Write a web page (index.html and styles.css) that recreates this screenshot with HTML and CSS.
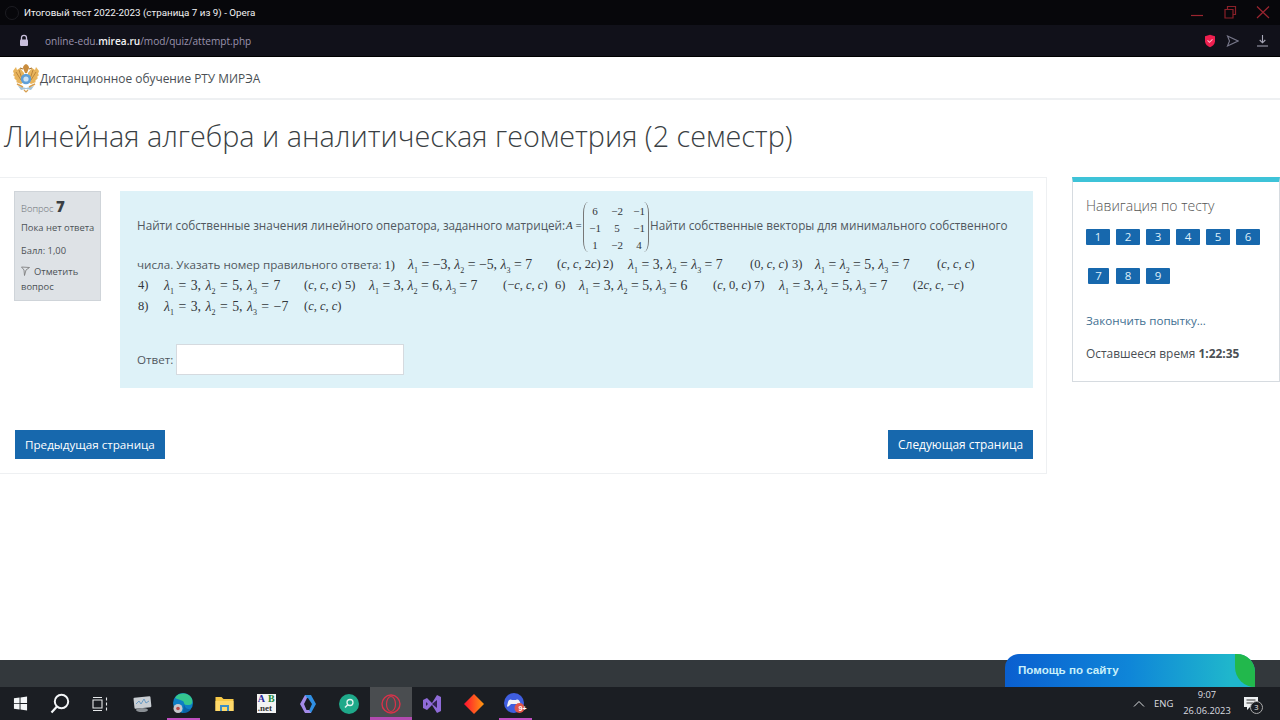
FILE: index.html
```html
<!DOCTYPE html>
<html lang="ru">
<head>
<meta charset="utf-8">
<title>Итоговый тест 2022-2023</title>
<link rel="stylesheet" href="styles.css">
</head>
<body>
<div class="screen">
  <div class="titlebar">
    <span class="title-dot"></span>
    <span class="title-text">Итоговый тест 2022-2023 (страница 7 из 9) - Opera</span>
    <div class="winctl">
      <svg width="14" height="14" viewBox="0 0 14 14"><path d="M1 10.500h12" stroke="#9a2530" stroke-width="1.200" fill="none"/></svg>
      <svg width="14" height="14" viewBox="0 0 14 14"><path d="M2 4.500h8v8.500H2zM4.500 4.500V1.500h8v8h-2.500" stroke="#8a2029" stroke-width="1.200" fill="none"/></svg>
      <svg width="14" height="14" viewBox="0 0 14 14"><path d="M1 1.500l12 11.500M13 1.500L1 13" stroke="#9a2530" stroke-width="1.200" fill="none"/></svg>
    </div>
  </div>
  <div class="urlbar">
    <svg class="lock" width="12" height="13" viewBox="0 0 12 13"><path d="M3.500 6V3.800a2.500 2.500 0 0 1 5 0V6" stroke="#c9bfdc" stroke-width="1.300" fill="none"/><rect x="2" y="5.500" width="8" height="6.500" rx="1" fill="#c9bfdc"/></svg>
    <span class="url">online-edu.<b>mirea.ru</b>/mod/quiz/attempt.php</span>
    <div class="url-tools">
      <svg width="12" height="14" viewBox="0 0 12 14"><path d="M1 2.200L6 .8l5 1.400v5c0 3-2.400 5-5 6-2.600-1-5-3-5-6z" fill="#ee1f4f"/><path d="M3.500 6.300l2 2 3-3" stroke="#ffb3c4" stroke-width="1.100" fill="none"/></svg>
      <svg width="13" height="12" viewBox="0 0 13 12"><path d="M1.500 1l10.500 5-10.500 5 2-5z" stroke="#77778a" stroke-width="1.100" fill="none"/></svg>
      <svg width="13" height="13" viewBox="0 0 13 13"><path d="M6.500 1v7.500M3.700 6l2.800 2.800L9.300 6M1 12h11" stroke="#a8a8b8" stroke-width="1.100" fill="none"/></svg>
    </div>
  </div>

  <header class="sitebar">
    <svg class="crest" width="28" height="30" viewBox="0 0 28 30">
      <path d="M12 10L8 5 5 7 4 4 1 8l1 3-1 1 2 2-1 1 3 3-1 1 5 2 3-2z" fill="#e8b45c"/>
      <path d="M16 10l4-5 3 2 1-3 3 4-1 3 1 1-2 2 1 1-3 3 1 1-5 2-3-2z" fill="#e8b45c"/>
      <path d="M4 9l5 8M7 7l3 9M24 9l-5 8M21 7l-3 9" stroke="#b67f38" stroke-width=".9"/>
      <path d="M11 5c0-2 1-3 3-4 2 1 3 2 3 4l-2 5h-2z" fill="#c98c3d"/>
      <path d="M11 6l-3-1M17 6l3-1" stroke="#a8742f" stroke-width="1.200"/>
      <circle cx="14" cy="16" r="5.200" fill="#5f9fd8"/>
      <circle cx="14" cy="16" r="2.600" fill="#cfe3f4"/>
      <path d="M6 23l8 2 8-2-3 4-5-1-5 1z" fill="#a4c4da"/>
      <path d="M5 21l6 3M23 21l-6 3" stroke="#d79f50" stroke-width="1.600"/>
      <path d="M12 27l2 2 2-2" stroke="#d79f50" stroke-width="1.200" fill="none"/>
    </svg>
    <span class="brand">Дистанционное обучение РТУ МИРЭА</span>
  </header>

  <main class="page">
    <h1 class="course">Линейная алгебра и аналитическая геометрия (2 семестр)</h1>
    <div class="columns">
      <section class="quiz">
        <div class="question">
          <aside class="qinfo">
            <div class="qno">Вопрос <b>7</b></div>
            <div class="qline">Пока нет ответа</div>
            <div class="qline">Балл: 1,00</div>
            <div class="qflag"><svg class="flagicon" width="9" height="10" viewBox="0 0 9 10"><path d="M.5 1l8 .5L5 4 3.500 9.500 3 4z" stroke="#777" stroke-width=".8" fill="none"/></svg><span class="flagtext">Отметить</span><br>вопрос</div>
          </aside>
          <div class="qbody">
            <div class="line first">
              <span>Найти собственные значения линейного оператора, заданного матрицей:</span>
              <span class="math a-eq"><i>A</i> =</span>
              <span class="matrix">
                <span>6</span><span>−2</span><span>−1</span>
                <span>−1</span><span>5</span><span>−1</span>
                <span>1</span><span>−2</span><span>4</span>
              </span>
              <span class="after">Найти собственные векторы для минимального собственного</span>
            </div>
            <div class="line second">
              <span class="t258">числа. Указать номер правильного ответа: <span class="math">1)</span></span>
              <span class="math eq e1"><i>λ</i><sub>1</sub> = −3, <i>λ</i><sub>2</sub> = −5, <i>λ</i><sub>3</sub> = 7</span>
              <span class="math v1">(<i>c</i>, <i>c</i>, 2<i>c</i>)</span>
              <span class="math n">2)</span>
              <span class="math eq e2"><i>λ</i><sub>1</sub> = 3, <i>λ</i><sub>2</sub> = <i>λ</i><sub>3</sub> = 7</span>
              <span class="math v2">(0, <i>c</i>, <i>c</i>)</span>
              <span class="math n3">3)</span>
              <span class="math eq e3"><i>λ</i><sub>1</sub> = <i>λ</i><sub>2</sub> = 5, <i>λ</i><sub>3</sub> = 7</span>
              <span class="math v3">(<i>c</i>, <i>c</i>, <i>c</i>)</span>
            </div>
            <div class="line third">
              <span class="math n4">4)</span>
              <span class="math eq e4"><i>λ</i><sub>1</sub> = 3, <i>λ</i><sub>2</sub> = 5, <i>λ</i><sub>3</sub> = 7</span>
              <span class="math v4">(<i>c</i>, <i>c</i>, <i>c</i>)</span>
              <span class="math n5">5)</span>
              <span class="math eq e5"><i>λ</i><sub>1</sub> = 3, <i>λ</i><sub>2</sub> = 6, <i>λ</i><sub>3</sub> = 7</span>
              <span class="math v5">(−<i>c</i>, <i>c</i>, <i>c</i>)</span>
              <span class="math n6">6)</span>
              <span class="math eq e6"><i>λ</i><sub>1</sub> = 3, <i>λ</i><sub>2</sub> = 5, <i>λ</i><sub>3</sub> = 6</span>
              <span class="math v6">(<i>c</i>, 0, <i>c</i>)</span>
              <span class="math n">7)</span>
              <span class="math eq e7"><i>λ</i><sub>1</sub> = 3, <i>λ</i><sub>2</sub> = 5, <i>λ</i><sub>3</sub> = 7</span>
              <span class="math v7">(2<i>c</i>, <i>c</i>, −<i>c</i>)</span>
            </div>
            <div class="line fourth">
              <span class="math n4">8)</span>
              <span class="math eq e4"><i>λ</i><sub>1</sub> = 3, <i>λ</i><sub>2</sub> = 5, <i>λ</i><sub>3</sub> = −7</span>
              <span class="math v4">(<i>c</i>, <i>c</i>, <i>c</i>)</span>
            </div>
            <div class="answer">
              <label class="answer-label" for="ans">Ответ:</label>
              <input id="ans" class="answer-input" type="text">
            </div>
          </div>
        </div>
        <div class="pager">
          <a class="btn">Предыдущая страница</a>
          <a class="btn next">Следующая страница</a>
        </div>
      </section>

      <aside class="nav">
        <h2 class="nav-title">Навигация по тесту</h2>
        <div class="nav-row">
          <span class="qbtn">1</span><span class="qbtn">2</span><span class="qbtn">3</span><span class="qbtn">4</span><span class="qbtn">5</span><span class="qbtn">6</span>
        </div>
        <div class="nav-row row2">
          <span class="qbtn small">7</span><span class="qbtn">8</span><span class="qbtn">9</span>
        </div>
        <a class="finish">Закончить попытку...</a>
        <div class="timer">Оставшееся время <b>1:22:35</b></div>
      </aside>
    </div>
  </main>

  <div class="greybar"></div>

  <div class="taskbar">
    <div class="tb-icons">
      <span class="cell nar"><svg width="15" height="15" viewBox="0 0 16 16"><path d="M1 2.500l6-.9v6H1zM8 1.500l7-1v7H8zM1 8.500h6v6l-6-.9zM8 8.500h7v7l-7-1z" fill="#f4f6f8"/></svg></span>
      <span class="cell nar"><svg width="20" height="21" viewBox="0 0 20 21"><circle cx="11.500" cy="8.500" r="6.700" stroke="#f4f6f8" stroke-width="2" fill="none"/><path d="M7 13.500L1.500 19.500" stroke="#f4f6f8" stroke-width="2.200"/></svg></span>
      <span class="cell nar"><svg width="16" height="14" viewBox="0 0 16 14"><path d="M1 3h9v8H1zM1 .5h9M1 13.500h9M14.500 .5v3M14.500 5.500v3M14.500 10.500v3" stroke="#e6e8ea" stroke-width="1.100" fill="none"/></svg></span>
      <span class="cell wide first-wide"><svg width="20" height="18" viewBox="0 0 20 18"><rect x="2" y="2" width="17" height="11" rx="1" fill="#c9ced3" transform="rotate(-6 10 8)"/><path d="M4 9l3-3 2 3 3-5 2 4 3-2" stroke="#6b9cc4" fill="none"/><ellipse cx="10" cy="15" rx="6" ry="2" fill="#8a8f94"/></svg></span>
      <span class="cell wide act"><svg width="22" height="21" viewBox="0 0 22 21"><circle cx="11" cy="10" r="10" fill="#0d7fc6"/><path d="M3 5C6-1 17-1 20 6c1 3 0 6-3 6-3 0-5 0-5-2 0-3-5-3-9-5z" fill="#35c68f"/><path d="M12 10c0 4 3 7 7 6-2 3-5 4-8 4z" fill="#0a63a8"/><circle cx="6" cy="15.500" r="4.500" fill="#c7c7cd"/><circle cx="6" cy="15.500" r="1.800" fill="#b84a4a"/></svg></span>
      <span class="cell wide"><svg width="19" height="16" viewBox="0 0 19 16"><path d="M.5 1h6l2 2h10v12H.5z" fill="#f7c948"/><path d="M.5 5h18v10H.5z" fill="#ffd96a"/><rect x="5" y="9" width="9" height="6" fill="#3e8fc4"/><rect x="7" y="11" width="5" height="4" fill="#ffd96a"/></svg></span>
      <span class="cell wide"><span class="abnet"><span class="ab-a">A</span><span class="ab-b">B</span><span class="ab-n">.net</span></span></span>
      <span class="cell wide"><svg width="20" height="20" viewBox="0 0 20 20"><path d="M7 1h6l5 9-5 9h-3l4-9-4-6H7z" fill="#2f8fe3"/><path d="M7 1L2 10l5 9h6l-2-3H8.500L6 10l3-6z" fill="#a58be8"/></svg></span>
      <span class="cell wide"><svg width="20" height="20" viewBox="0 0 20 20"><circle cx="10" cy="10" r="10" fill="#1fa98a"/><circle cx="11" cy="8.500" r="3" stroke="#e5f5f0" stroke-width="1.300" fill="none"/><path d="M8.800 10.700L6 13.500" stroke="#e5f5f0" stroke-width="1.500"/></svg></span>
      <span class="cell wide opera"><svg width="20" height="20" viewBox="0 0 20 20"><circle cx="10" cy="10" r="9" stroke="#d8324a" stroke-width="1.400" fill="none"/><ellipse cx="10" cy="10" rx="4.500" ry="7.500" stroke="#d8324a" stroke-width="1.200" fill="none"/></svg></span>
      <span class="cell wide"><svg width="20" height="20" viewBox="0 0 20 20"><path d="M1 6l4-2 5 5 5-8 4 2v14l-4 2-5-8-5 5-4-2z" fill="#8f6bd8"/><path d="M15 6v8l-5-4z" fill="#31244f"/><path d="M4 8v4l2-2z" fill="#31244f"/></svg></span>
      <span class="cell wide"><svg width="20" height="20" viewBox="0 0 20 20"><defs><linearGradient id="dg" x1="0" y1="0" x2="1" y2="0"><stop offset="0" stop-color="#ff1030"/><stop offset="1" stop-color="#ff9a10"/></linearGradient></defs><path d="M10 0l10 10-10 10L0 10z" fill="url(#dg)"/></svg></span>
      <span class="cell wide"><svg width="22" height="21" viewBox="0 0 22 21"><circle cx="10" cy="10" r="10" fill="#3f5ee0"/><path d="M4 9c1-3 3-3 4-2h4c2-1 3 0 4 2l1 4c0 1-1 1-2 0l-2-2H7l-2 2c-1 1-2 1-2 0z" fill="#f2f2f6"/><circle cx="15.500" cy="15" r="5" fill="#e0564a"/></svg><span class="badge9">9+</span></span>
    </div>
    <div class="tray">
      <svg width="12" height="7" viewBox="0 0 12 7"><path d="M1 6.500L6 1.500l5 5" stroke="#dcdde0" stroke-width="1" fill="none"/></svg>
      <span class="lang">ENG</span>
      <span class="clock"><span>9:07</span><span>26.06.2023</span></span>
      <span class="notif">
        <svg width="14" height="14" viewBox="0 0 14 14"><path d="M0 0h14v10H6l-3 3v-3H0z" fill="#eef0f2"/><path d="M2.500 3h9M2.500 6h9" stroke="#333" stroke-width="1"/></svg>
        <span class="notif-n">3</span>
      </span>
    </div>
  </div>

  <div class="help">
    <span class="help-text">Помощь по сайту</span>
    <span class="help-leaf"></span>
  </div>
</div>
</body>
</html>
```
FILE: styles.css
```css
* { box-sizing: border-box; }
html, body { margin: 0; padding: 0; }
body { font-family: "Open Sans", "Liberation Sans", sans-serif; background: #fff; color: #444; }
.screen { position: relative; width: 1280px; height: 720px; overflow: hidden; display: flex; flex-direction: column; }

.titlebar { height: 25px; background: #07070b; display: flex; align-items: center; padding-left: 5px; flex: none; }
.title-dot { width: 14px; height: 14px; border-radius: 50%; border: 1px solid #1c1c22; margin-right: 5px; }
.title-text { font: 9.8px/25px Roboto, "Open Sans", sans-serif; color: #f2f2f4; white-space: nowrap; }
.winctl { margin-left: auto; display: flex; gap: 19px; padding-right: 10px; margin-top: -1px; }

.urlbar { height: 32px; background: #11111a; display: flex; align-items: center; flex: none; border-bottom: 1px solid #000; }
.lock { margin-left: 18px; }
.url { margin-left: 15px; font: 10.1px "Open Sans", sans-serif; color: #9a93ad; white-space: nowrap; }
.url b { color: #f2f2f4; font-weight: 600; }
.url-tools { margin-left: auto; display: flex; align-items: center; gap: 10px; padding-right: 11px; }
.url-tools svg:nth-child(3) { margin-left: 7px; }

.sitebar { height: 43px; flex: none; display: flex; align-items: center; padding-left: 12px; border-bottom: 2px solid #eef0f2; background: #fff; }
.crest { flex: none; }
.brand { font-size: 11.9px; color: #4a4f54; white-space: nowrap; }

.page { flex: 1; min-height: 0; display: flex; flex-direction: column; }
.course { margin: 16px 0 0 4px; height: 61px; font-size: 28.75px; line-height: 40px; font-weight: 300; color: #3a3f44; white-space: nowrap; }
.columns { display: flex; align-items: flex-start; }

.quiz { width: 1047px; height: 297px; border: 1px solid #eef0f2; border-left: 0; padding: 13px 13px 0 14px; flex: none; }
.question { display: flex; gap: 19px; }
.qinfo { width: 87px; height: 110px; flex: none; background: #dee2e6; border: 1px solid #cfd4d9; padding: 7px 0 0 6px; font-size: 9.4px; color: #4d5257; }
.qno { font-size: 9.4px; line-height: 15px; color: #6a6f74; font-weight: 300; }
.qno b { font-size: 15px; font-weight: 800; color: #3a3f44; }
.qline { line-height: 13px; margin-top: 5px; white-space: nowrap; }
.qline:nth-child(3) { margin-top: 10px; }
.qflag { line-height: 15px; margin-top: 7px; }
.flagicon { vertical-align: -1px; }
.flagtext { margin-left: 4px; }

.qbody { width: 913px; height: 197px; background: #def2f8; padding: 11px 14px 0 17px; font-size: 11.65px; color: #51585e; }
.line { display: flex; align-items: center; white-space: nowrap; height: 21px; }
.line.first { height: 50px; margin-bottom: 1px; font-size: 11.73px; }
.first > span:not(.matrix) { margin-bottom: 4px; }
.first > .a-eq { margin-bottom: 2px; }
.line.second { margin-top: 2px; }
.math { font-family: "Liberation Serif", serif; font-size: 12.5px; color: #33373b; white-space: nowrap; flex: none; }
.eq { font-size: 13.8px; }
.math sub { font-size: 8px; line-height: 0; }
.a-eq { font-size: 11px; margin-left: 1px; width: 18px; flex: none; }
.matrix { position: relative; display: grid; grid-template-columns: 22px 22px 22px; grid-auto-rows: 17px; width: 66px; height: 50px; flex: none; margin-left: -1px; font-family: "Liberation Serif", serif; font-size: 11px; color: #33373b; text-align: center; align-items: center; border-left: 1px solid #777; border-right: 1px solid #777; border-radius: 5px / 11px; }
.after { margin-left: 1px; }
.t258 { width: 271px; flex: none; }
.e1 { width: 149px; }
.v1 { width: 46px; }
.n { width: 25px; }
.n3 { width: 23px; }
.n5 { width: 24px; }
.e2 { width: 122px; }
.v2 { width: 42px; }
.e3 { width: 122px; }
.n4 { width: 26px; margin-left: 1px; }
.e4 { width: 140px; word-spacing: 1px; }
.v4 { width: 41px; }
.e5 { width: 134px; }
.v5 { width: 52px; }
.n6 { width: 24px; }
.e6 { width: 134px; }
.v6 { width: 41px; }
.e7 { width: 134px; }

.answer { display: flex; align-items: center; margin-top: 27px; }
.answer-label { width: 39px; font-size: 11.65px; flex: none; }
.answer-input { width: 228px; height: 31px; background: #fff; border: 1px solid #d5dadf; padding: 0; }

.pager { display: flex; justify-content: space-between; margin-top: 42px; padding-left: 1px; }
.btn { height: 29px; line-height: 29px; padding: 0 10px; background: #1768ad; color: #fff; font-size: 11.65px; white-space: nowrap; }
.next { font-size: 11.9px; padding: 0 10px; }

.nav { margin-left: 25px; width: 208px; height: 205px; flex: none; background: #fff; border: 1px solid #d6dbe0; border-top: 5px solid #3ec3d8; padding: 0 13px; }
.nav-title { margin: 14px 0 0; font-size: 14px; line-height: 19px; font-weight: 300; color: #555; white-space: nowrap; }
.nav-row { display: flex; gap: 6px; margin-top: 14px; }
.row2 { margin-top: 23px; }
.qbtn { width: 24px; height: 16px; background: #1768ad; color: #dff0fa; font-size: 11.5px; line-height: 16px; text-align: center; border-radius: 1px; }
.qbtn.small { width: 21px; margin-left: 2px; margin-right: 1px; }
.finish { display: block; margin-top: 29px; font-size: 11.6px; line-height: 16px; color: #3f6f92; white-space: nowrap; }
.timer { margin-top: 16px; font-size: 11.9px; line-height: 16px; color: #4a4f54; white-space: nowrap; }
.timer b { font-weight: 700; }

.greybar { height: 27px; flex: none; background: #33383c; }
.taskbar { height: 33px; flex: none; background: #1b1e23; display: flex; align-items: stretch; }
.tb-icons { display: flex; align-items: stretch; }
.cell { position: relative; display: flex; align-items: center; justify-content: center; flex: none; height: 33px; }
.nar { width: 40px; }
.wide { width: 41.5px; }
.first-wide { margin-left: 1px; }
.act::after { content: ""; position: absolute; left: 4px; right: 4px; bottom: 0; height: 2px; background: #c04fc0; }
.cell:last-child::after { content: ""; position: absolute; left: 4px; right: 4px; bottom: 0; height: 2px; background: #c04fc0; }
.opera { background: #4a4d50; }
.opera::after { content: ""; position: absolute; left: 0; right: 0; bottom: 0; height: 3px; background: #b24bb0; }
.abnet { position: relative; display: block; width: 19px; height: 19px; background: #f3f3f3; font-family: "Liberation Serif", serif; font-weight: 700; font-size: 10px; line-height: 10px; }
.ab-a { position: absolute; left: 1px; top: 0; color: #2a2a9a; }
.ab-b { position: absolute; right: 1px; top: 0; color: #1e8a3a; }
.ab-n { position: absolute; left: 1px; bottom: 0; color: #333; font-size: 9px; }
.badge9 { position: absolute; left: 24px; top: 18px; font: 700 7px/8px "Liberation Sans", sans-serif; color: #fff; }

.tray { margin-left: auto; display: flex; align-items: center; padding-right: 18px; color: #dcdde0; }
.tray svg { flex: none; }
.lang { margin-left: 9px; font-size: 9.5px; width: 22px; }
.clock { margin-left: 8px; display: flex; flex-direction: column; align-items: center; width: 46px; font-size: 9.3px; line-height: 16px; margin-top: -1px; }
.notif { position: relative; margin-left: 14px; width: 18px; height: 20px; }
.notif-n { position: absolute; left: 6px; top: 7px; width: 13px; height: 13px; border: 1px solid #aaa; border-radius: 50%; background: #1b1e23; font-size: 7.5px; line-height: 11px; text-align: center; color: #eee; }

.help { position: absolute; left: 1005px; top: 654px; width: 250px; height: 33px; border-radius: 14px 18px 0 0; overflow: hidden; background: linear-gradient(90deg, #0a5fd0 0%, #0f86d8 50%, #1fb6cc 90%); display: flex; align-items: center; padding-left: 13px; }
.help-text { font: 700 11.6px "Liberation Sans", sans-serif; color: #c9f0fa; margin-top: -2px; white-space: nowrap; }
.help-leaf { position: absolute; right: 0; top: 0; width: 20px; height: 33px; background: #22b84c; border-radius: 0 18px 0 24px; }
```
